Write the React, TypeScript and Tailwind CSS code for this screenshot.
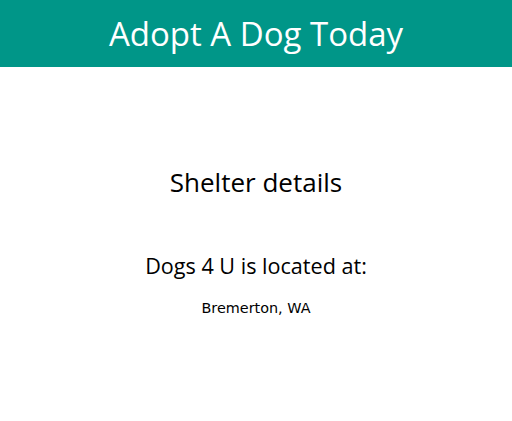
export default function App() {
  return (
    <div className="w-[512px] h-[421px] bg-white font-['Open_Sans',sans-serif] text-black">
      <header className="h-[67px] bg-[#009688] flex items-center justify-center">
        <h1 className="text-[33px] leading-none text-white font-normal">Adopt A Dog Today</h1>
      </header>
      <main className="flex flex-col items-center pt-[99px]">
        <h2 className="text-[26px] leading-[32px]">Shelter details</h2>
        <p className="mt-[52px] text-[21.6px] leading-[32px]">Dogs 4 U is located at:</p>
        <p className="mt-[17px] text-[14.4px] leading-[18px] font-['DejaVu_Sans',sans-serif]">Bremerton, WA</p>
      </main>
    </div>
  );
}
